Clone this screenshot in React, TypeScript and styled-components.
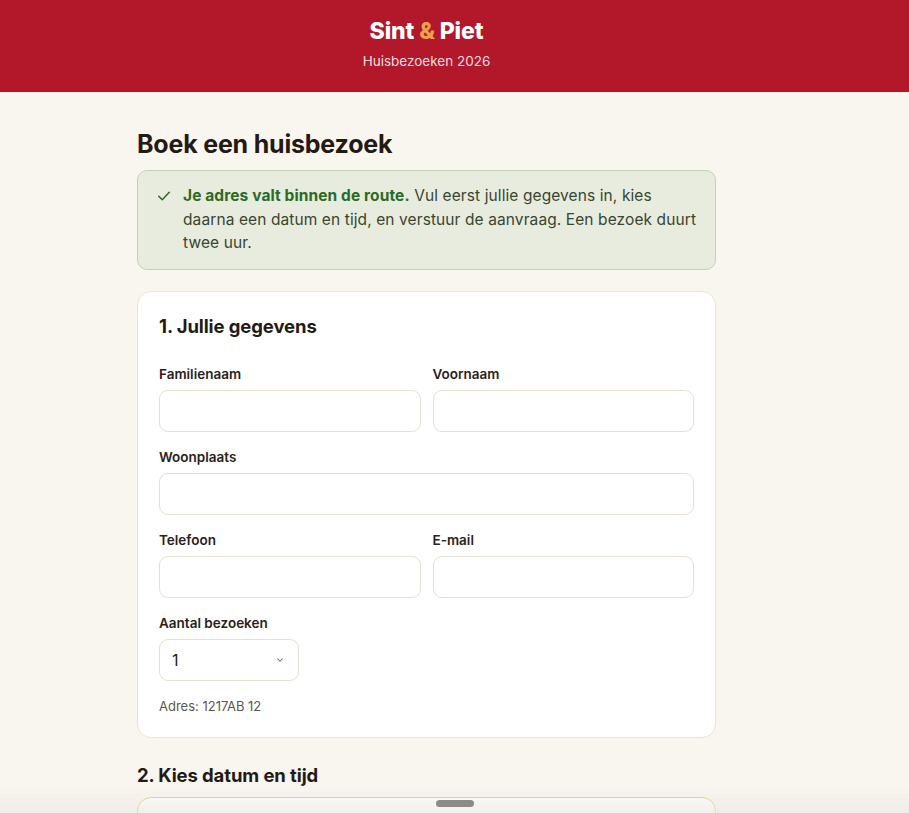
import React from 'react';
import styled, { createGlobalStyle } from 'styled-components';

const GlobalStyle = createGlobalStyle`
  * { box-sizing: border-box; }
  body {
    margin: 0;
    background: #f9f6f0;
    font-family: Inter, "Noto Sans", Arial, sans-serif;
    color: #231a14;
  }
`;

const Header = styled.header`
  background: #b3172a;
  height: 92px;
`;

const HeaderInner = styled.div`
  width: 579px;
  margin-left: 137px;
  display: flex;
  flex-direction: column;
  align-items: center;
  padding-top: 17px;
`;

const Brand = styled.div`
  color: #fff;
  font-size: 23px;
  font-weight: 800;
  line-height: 28px;
  letter-spacing: -0.1px;

  span {
    color: #e9a24c;
  }
`;

const Tagline = styled.div`
  color: #f6dde0;
  font-size: 13.5px;
  line-height: 16px;
  margin-top: 8px;
`;

const Main = styled.main`
  width: 579px;
  margin-left: 137px;
  padding: 37px 0 40px;
`;

const Title = styled.h1`
  margin: 0 0 11px;
  font-size: 25px;
  line-height: 30px;
  font-weight: 700;
  letter-spacing: -0.2px;
`;

const Alert = styled.div`
  display: flex;
  gap: 12px;
  background: #e8ecdf;
  border: 1px solid #c3d1b5;
  border-radius: 10px;
  padding: 13px 12px 14px 19px;
  font-size: 15.5px;
  line-height: 23.5px;
  letter-spacing: 0.1px;
  color: #38452f;

  svg {
    flex: none;
    margin-top: 5px;
  }

  strong {
    color: #2b6a27;
    font-weight: 700;
  }
`;

const Card = styled.section<{ $accent?: boolean }>`
  background: #fff;
  border: 1px solid ${p => (p.$accent ? '#e2bd72' : '#ece3d6')};
  border-radius: 14px;
  padding: 22px 21px 23px;
  margin-top: 21px;
  min-height: ${p => (p.$accent ? '60px' : 'auto')};
`;

const SectionTitle = styled.h2<{ $outside?: boolean }>`
  margin: ${p => (p.$outside ? '25px 0 10px' : '0 0 28px')};
  font-size: 18.5px;
  line-height: 24px;
  font-weight: 700;
  letter-spacing: -0.1px;

  & + ${Card} {
    margin-top: 0;
  }
`;

const Row = styled.div<{ $cols: number }>`
  display: grid;
  grid-template-columns: repeat(${p => p.$cols}, minmax(0, 1fr));
  column-gap: 12px;
`;

const Field = styled.label`
  display: flex;
  flex-direction: column;
  min-width: 0;
  margin-bottom: 17px;
`;

const Label = styled.span`
  font-size: 13.5px;
  line-height: 17px;
  font-weight: 600;
  color: #2a211b;
  margin-bottom: 7px;
`;

const Input = styled.input`
  width: 100%;
  min-width: 0;
  height: 42px;
  border: 1px solid #e6dfd4;
  border-radius: 9px;
  background: #fff;
  font: inherit;
  padding: 0 12px;
  outline: none;
`;

const SelectWrap = styled.div`
  position: relative;
  width: 140px;

  svg {
    position: absolute;
    right: 14px;
    top: 16px;
    pointer-events: none;
  }
`;

const Select = styled.select`
  appearance: none;
  width: 100%;
  height: 42px;
  border: 1px solid #e6dfd4;
  border-radius: 9px;
  background: #fff;
  font-family: inherit;
  font-size: 16px;
  color: #231a14;
  padding: 0 12px;
  outline: none;
`;

const Note = styled.p`
  margin: 1px 0 0;
  font-size: 13px;
  line-height: 16px;
  color: #5b5550;
`;

const Sheet = styled.div`
  position: fixed;
  left: 0;
  right: 0;
  bottom: 0;
  height: 30px;
  background: linear-gradient(to bottom, rgba(240, 237, 232, 0), rgba(236, 233, 228, 0.3) 45%, rgba(236, 233, 228, 0.7));
  display: flex;
  justify-content: center;
  align-items: flex-end;
  padding-bottom: 6px;
`;

const Handle = styled.div`
  width: 38px;
  height: 7px;
  border-radius: 4px;
  background: #8c8b89;
`;

const Check = () => (
  <svg width="14" height="14" viewBox="0 0 24 24" fill="none" stroke="#2b6a27" strokeWidth="2.6" strokeLinecap="round" strokeLinejoin="round">
    <path d="M3 12.5l6 6L21 5.5" />
  </svg>
);

const Chevron = () => (
  <svg width="10" height="10" viewBox="0 0 24 24" fill="none" stroke="#6b6560" strokeWidth="2.5" strokeLinecap="round" strokeLinejoin="round">
    <path d="M6 9l6 6 6-6" />
  </svg>
);

export default function App() {
  return (
    <>
      <GlobalStyle />
      <Header>
        <HeaderInner>
          <Brand>
            Sint <span>&amp;</span> Piet
          </Brand>
          <Tagline>Huisbezoeken 2026</Tagline>
        </HeaderInner>
      </Header>
      <Main>
        <Title>Boek een huisbezoek</Title>
        <Alert>
          <Check />
          <div>
            <strong>Je adres valt binnen de route.</strong> Vul eerst jullie gegevens in, kies daarna een datum en
            tijd, en verstuur de aanvraag. Een bezoek duurt twee uur.
          </div>
        </Alert>

        <Card>
          <SectionTitle>1. Jullie gegevens</SectionTitle>
          <Row $cols={2}>
            <Field>
              <Label>Familienaam</Label>
              <Input type="text" />
            </Field>
            <Field>
              <Label>Voornaam</Label>
              <Input type="text" />
            </Field>
          </Row>
          <Row $cols={1}>
            <Field>
              <Label>Woonplaats</Label>
              <Input type="text" />
            </Field>
          </Row>
          <Row $cols={2}>
            <Field>
              <Label>Telefoon</Label>
              <Input type="tel" />
            </Field>
            <Field>
              <Label>E-mail</Label>
              <Input type="email" />
            </Field>
          </Row>
          <Field>
            <Label>Aantal bezoeken</Label>
            <SelectWrap>
              <Select defaultValue="1">
                <option value="1">1</option>
                <option value="2">2</option>
                <option value="3">3</option>
              </Select>
              <Chevron />
            </SelectWrap>
          </Field>
          <Note>Adres: 1217AB 12</Note>
        </Card>

        <SectionTitle $outside>2. Kies datum en tijd</SectionTitle>
        <Card $accent />
      </Main>
      <Sheet>
        <Handle />
      </Sheet>
    </>
  );
}
